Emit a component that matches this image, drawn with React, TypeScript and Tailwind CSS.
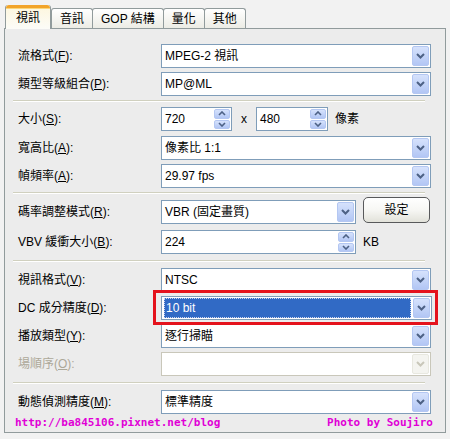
import React from "react";

const FONT = "font-['Tahoma','Liberation_Sans','Noto_Sans_CJK_TC',sans-serif]";

function Chevron({ disabled = false }: { disabled?: boolean }) {
  return (
    <svg width="9" height="6" viewBox="0 0 9 6">
      <path d="M1 1 L4.5 4.5 L8 1" fill="none" stroke={disabled ? "#c9c7ba" : "#4d6185"} strokeWidth="2" />
    </svg>
  );
}

function DropBtn({ disabled = false }: { disabled?: boolean }) {
  return (
    <div
      className={`w-[17px] h-full flex items-center justify-center rounded-[2px] border ${
        disabled
          ? "border-[#e8e8e0] bg-[#f4f4f0]"
          : "border-[#b4c7f2] bg-gradient-to-b from-[#d6e2fc] to-[#b2c6f4]"
      }`}
    >
      <Chevron disabled={disabled} />
    </div>
  );
}

function Select({
  value,
  w = "w-[271px]",
  disabled = false,
  selected = false,
}: {
  value: string;
  w?: string;
  disabled?: boolean;
  selected?: boolean;
}) {
  return (
    <div
      className={`${w} h-[24px] flex items-stretch bg-white border ${
        disabled ? "border-[#c9c7ba]" : "border-[#7f9db9]"
      } p-[1px]`}
    >
      <div className="flex-1 flex items-center pl-[1px] pr-[2px]">
        {selected ? (
          <div className="w-full h-full bg-[#316ac5] border border-dotted border-[#c8d4ee] text-white flex items-center pl-[1px] text-[12px]">
            {value}
          </div>
        ) : (
          <span className="text-[12px] text-black pl-[1px]">{value}</span>
        )}
      </div>
      <DropBtn disabled={disabled} />
    </div>
  );
}

function Spin() {
  return (
    <div className="w-[16px] h-full flex flex-col gap-[1px]">
      {[0, 1].map((i) => (
        <div
          key={i}
          className="flex-1 flex items-center justify-center rounded-[2px] border border-[#b4c7f2] bg-gradient-to-b from-[#d6e2fc] to-[#b2c6f4]"
        >
          <svg width="8" height="5" viewBox="0 0 8 5">
            <path
              d={i === 0 ? "M1 4 L4 1 L7 4" : "M1 1 L4 4 L7 1"}
              fill="none"
              stroke="#4d6185"
              strokeWidth="1.6"
            />
          </svg>
        </div>
      ))}
    </div>
  );
}

function SpinInput({ value, w }: { value: string; w: string }) {
  return (
    <div className={`${w} h-[24px] flex items-stretch bg-white border border-[#7f9db9] p-[1px]`}>
      <div className="flex-1 flex items-center pl-[2px] text-[12px]">{value}</div>
      <Spin />
    </div>
  );
}

function Label({ pre, k, disabled = false }: { pre: string; k: string; disabled?: boolean }) {
  return (
    <div className={`w-[143px] shrink-0 text-[12px] ${disabled ? "text-[#aca899]" : "text-black"}`}>
      {pre}(<span className="underline">{k}</span>):
    </div>
  );
}

function Row({ children, h = "h-[28px]" }: { children: React.ReactNode; h?: string }) {
  return <div className={`${h} flex items-center`}>{children}</div>;
}

function Sep({ h }: { h: string }) {
  return (
    <div className={`${h} flex items-center pr-[1px]`}>
      <div className="w-full h-[2px] border-t border-[#d0d0bf] border-b border-b-white -ml-[5px]" />
    </div>
  );
}

function Tab({ label, active = false }: { label: string; active?: boolean }) {
  if (active) {
    return (
      <div className="relative z-10 -mb-[1px] h-[24px] w-[46px] justify-center flex items-center bg-gradient-to-b from-[#fdf6dc] to-[#fcfcf8] border border-[#919b9c] border-b-0 border-t-0 rounded-t-[3px] overflow-hidden">
        <div className="absolute top-0 left-0 right-0 h-[3px] bg-[#f2a42a] rounded-t-[3px]" />
        <div className="absolute top-[3px] left-0 right-0 h-[1px] bg-[#fbd67a]" />
        <span className="text-[12px] text-black pt-[2px]">{label}</span>
      </div>
    );
  }
  return (
    <div className="h-[20px] px-[8px] flex items-center bg-gradient-to-b from-white to-[#ecece5] border border-[#919b9c] border-b-0 rounded-t-[3px] -ml-[1px]">
      <span className="text-[12px] text-black">{label}</span>
    </div>
  );
}

export default function App() {
  return (
    <div className={`w-[450px] h-[439px] bg-[#f2f2f2] pt-[5px] ${FONT}`}>
      <div className="ml-[5px] flex items-end">
        <Tab label="視訊" active />
        <div className="ml-[1px] flex items-end">
          <Tab label="音訊" />
          <Tab label="GOP 結構" />
          <Tab label="量化" />
          <Tab label="其他" />
        </div>
      </div>
      <div className="ml-[4px] w-[442px] h-[405px] border border-[#919b9c] bg-[#ececec] pl-[13px] pr-[14px] pt-[13px]">
        <Row>
          <Label pre="流格式" k="F" />
          <Select value="MPEG-2 視訊" />
        </Row>
        <Row>
          <Label pre="類型等級組合" k="P" />
          <Select value="MP@ML" />
        </Row>
        <Sep h="h-[6px]" />
        <Row h="h-[30px]">
          <Label pre="大小" k="S" />
          <SpinInput value="720" w="w-[71px]" />
          <span className="w-[24px] text-center text-[12px]">x</span>
          <SpinInput value="480" w="w-[72px]" />
          <span className="ml-[7px] text-[12px]">像素</span>
        </Row>
        <Row>
          <Label pre="寬高比" k="A" />
          <Select value="像素比 1:1" />
        </Row>
        <Row>
          <Label pre="幀頻率" k="A" />
          <Select value="29.97 fps" />
        </Row>
        <Sep h="h-[6px]" />
        <Row h="h-[32px]">
          <Label pre="碼率調整模式" k="R" />
          <Select value="VBR (固定畫質)" w="w-[195px]" />
          <button className="ml-[7px] -mt-[4px] w-[67px] h-[26px] rounded-[5px] border border-[#58595b] bg-gradient-to-b from-white via-[#f7f7f4] to-[#e2e2da] text-[12px] text-black">
            設定
          </button>
        </Row>
        <Row>
          <Label pre="VBV 緩衝大小" k="B" />
          <SpinInput value="224" w="w-[195px]" />
          <span className="ml-[7px] text-[12px]">KB</span>
        </Row>
        <Sep h="h-[10px]" />
        <Row>
          <Label pre="視訊格式" k="V" />
          <Select value="NTSC" />
        </Row>
        <Row>
          <Label pre="DC 成分精度" k="D" />
          <div className="relative">
            <Select value="10 bit" selected />
            <div className="absolute -left-[8px] -top-[6px] w-[285px] h-[35px] border-[3px] border-[#e4121c]" />
          </div>
        </Row>
        <Row>
          <Label pre="播放類型" k="Y" />
          <Select value="逐行掃瞄" />
        </Row>
        <Row>
          <Label pre="場順序" k="O" disabled />
          <Select value="" disabled />
        </Row>
        <Sep h="h-[10px]" />
        <Row>
          <Label pre="動態偵測精度" k="M" />
          <Select value="標準精度" />
        </Row>
        <div className="-ml-[3px] -mr-[2px] flex justify-between font-['DejaVu_Sans_Mono',monospace] font-bold text-[11px] text-[#e000d6] leading-[14px]">
          <span>http://ba845106.pixnet.net/blog</span>
          <span>Photo by Soujiro</span>
        </div>
      </div>
    </div>
  );
}
